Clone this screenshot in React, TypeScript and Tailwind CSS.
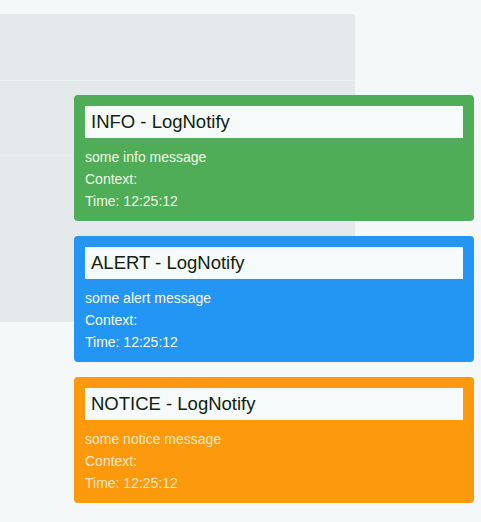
import React from 'react';

type Toast = {
  level: string;
  message: string;
  bg: string;
  text: string;
};

const TOASTS: Toast[] = [
  { level: 'INFO', message: 'some info message', bg: 'bg-[#4fad57]', text: 'text-[#f2f6e6]' },
  { level: 'ALERT', message: 'some alert message', bg: 'bg-[#2296f2]', text: 'text-[#f8fbff]' },
  { level: 'NOTICE', message: 'some notice message', bg: 'bg-[#fd990d]', text: 'text-[#f8e8c6]' },
];

export default function App() {
  return (
    <div
      className="relative w-[481px] h-[522px] bg-[#f4f8f9] overflow-hidden"
      style={{ fontFamily: '"Liberation Sans", Arial, sans-serif' }}
    >
      <div className="pt-[14px]">
        <div className="w-[355px] h-[308px] bg-[#e4eaeb] rounded-tr-[2px]">
          <div className="h-[67px] border-b border-[#eaeff0]" />
          <div className="h-[7px] border-b border-[#e6e8de]" />
          <div className="h-[68px] border-b border-[#e8eded]" />
        </div>
      </div>

      <div className="absolute left-[74px] top-[95px] w-[400px] flex flex-col gap-[15px]">
        {TOASTS.map((t) => (
          <div key={t.level} className={`${t.bg} rounded-[4px] pt-[11px] px-[11px] pb-[9px]`}>
            <div className="h-[32px] bg-[#f6fafa] flex items-center px-[6px] mb-[8px]">
              <span className="text-[18.5px] text-[#0f230f] leading-none">{t.level} - LogNotify</span>
            </div>
            <div className={`${t.text} text-[14px] leading-[22px]`}>
              <p>{t.message}</p>
              <p>Context:</p>
              <p>Time: 12:25:12</p>
            </div>
          </div>
        ))}
      </div>
    </div>
  );
}
